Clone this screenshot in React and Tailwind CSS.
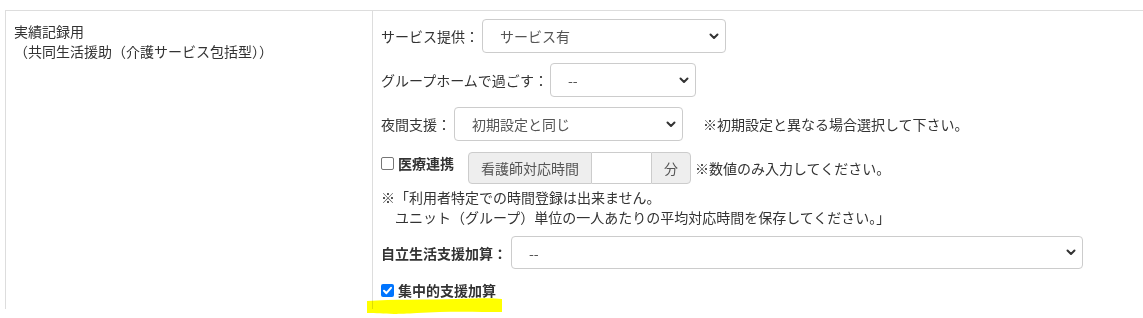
import React from 'react'

// 実績記録用 settings row — left label cell + right form cell.

function Chevron() {
  return (
    <svg width="10" height="7" viewBox="0 0 10 7" className="shrink-0">
      <path d="M1.5 1.5 L5 5 L8.5 1.5" fill="none" stroke="#333" strokeWidth="2" strokeLinecap="round" strokeLinejoin="round" />
    </svg>
  )
}

function FakeSelect({ value, className }) {
  return (
    <div
      className={`flex items-center justify-between bg-white border border-[#ccc] rounded-[4px] pl-[17px] pr-[6px] text-[#555] ${className}`}
    >
      <span>{value}</span>
      <Chevron />
    </div>
  )
}

function Box({ checked }) {
  if (checked) {
    return (
      <span className="w-[13px] h-[13px] rounded-[2px] bg-[#0075ff] flex items-center justify-center shrink-0">
        <svg width="11" height="11" viewBox="0 0 11 11">
          <path d="M2 5.8 L4.4 8.2 L9 2.8" fill="none" stroke="#fff" strokeWidth="2" strokeLinecap="round" strokeLinejoin="round" />
        </svg>
      </span>
    )
  }
  return <span className="w-[13px] h-[13px] rounded-[2px] border border-[#767676] bg-white shrink-0" />
}

export default function App() {
  return (
    <div
      className="relative w-[1143px] h-[318px] bg-white overflow-hidden text-[14px] leading-[20px] text-[#333]"
      style={{ fontFamily: '"Noto Sans CJK JP", "Noto Sans", sans-serif' }}
    >
      <div className="pt-[10px] pl-[5px]">
        <div className="flex border-t border-[#ddd] h-[299px]">
          <div className="w-[368px] border-l border-r border-[#ddd] pl-[8px] pt-[10px]">
            <div>実績記録用</div>
            <div>（共同生活援助（介護サービス包括型））</div>
          </div>

          <div className="flex-1 pl-[8px] pt-[8px]">
            <div className="flex items-center">
              <span>サービス提供：</span>
              <FakeSelect value="サービス有" className="ml-[3px] w-[244px] h-[34px]" />
            </div>

            <div className="flex items-center mt-[10px]">
              <span>グループホームで過ごす：</span>
              <FakeSelect value="--" className="ml-[2px] w-[146px] h-[34px]" />
            </div>

            <div className="flex items-center mt-[10px]">
              <span>夜間支援：</span>
              <FakeSelect value="初期設定と同じ" className="ml-[3px] w-[229px] h-[34px]" />
              <span className="ml-[20px]">※初期設定と異なる場合選択して下さい。</span>
            </div>

            <div className="flex items-start mt-[11px]">
              <label className="flex items-center gap-[4px] mt-[1px] font-bold">
                <Box />
                <span>医療連携</span>
              </label>
              <div className="flex h-[32px] ml-[14px] text-[#555]">
                <div className="w-[124px] flex items-center justify-center bg-[#eee] border border-[#ccc] rounded-l-[4px]">
                  看護師対応時間
                </div>
                <div className="w-[59px] bg-white border-y border-[#ccc]" />
                <div className="w-[40px] flex items-center justify-center bg-[#eee] border border-[#ccc] rounded-r-[4px]">
                  分
                </div>
              </div>
              <span className="ml-[4px] self-center">※数値のみ入力してください。</span>
            </div>

            <div className="mt-[3px]">
              <div>※「利用者特定での時間登録は出来ません。</div>
              <div>　ユニット（グループ）単位の一人あたりの平均対応時間を保存してください。」</div>
            </div>

            <div className="flex items-center mt-[9px]">
              <span className="font-bold">自立生活支援加算：</span>
              <FakeSelect value="--" className="ml-[4px] w-[572px] h-[33px]" />
            </div>

            <label className="flex items-center gap-[4px] mt-[11px] font-bold">
              <Box checked />
              <span>集中的支援加算</span>
            </label>
          </div>
        </div>
      </div>

      <svg
        className="absolute left-[367px] top-[297px] mix-blend-multiply"
        width="136"
        height="17"
        viewBox="0 0 136 17"
      >
        <path
          d="M0 4 C 25 2, 60 3, 90 2 S 125 1, 135 2 L 135 15 C 110 15, 80 14, 50 16 S 15 16, 0 16 Z"
          fill="#ffff00"
        />
      </svg>
    </div>
  )
}
